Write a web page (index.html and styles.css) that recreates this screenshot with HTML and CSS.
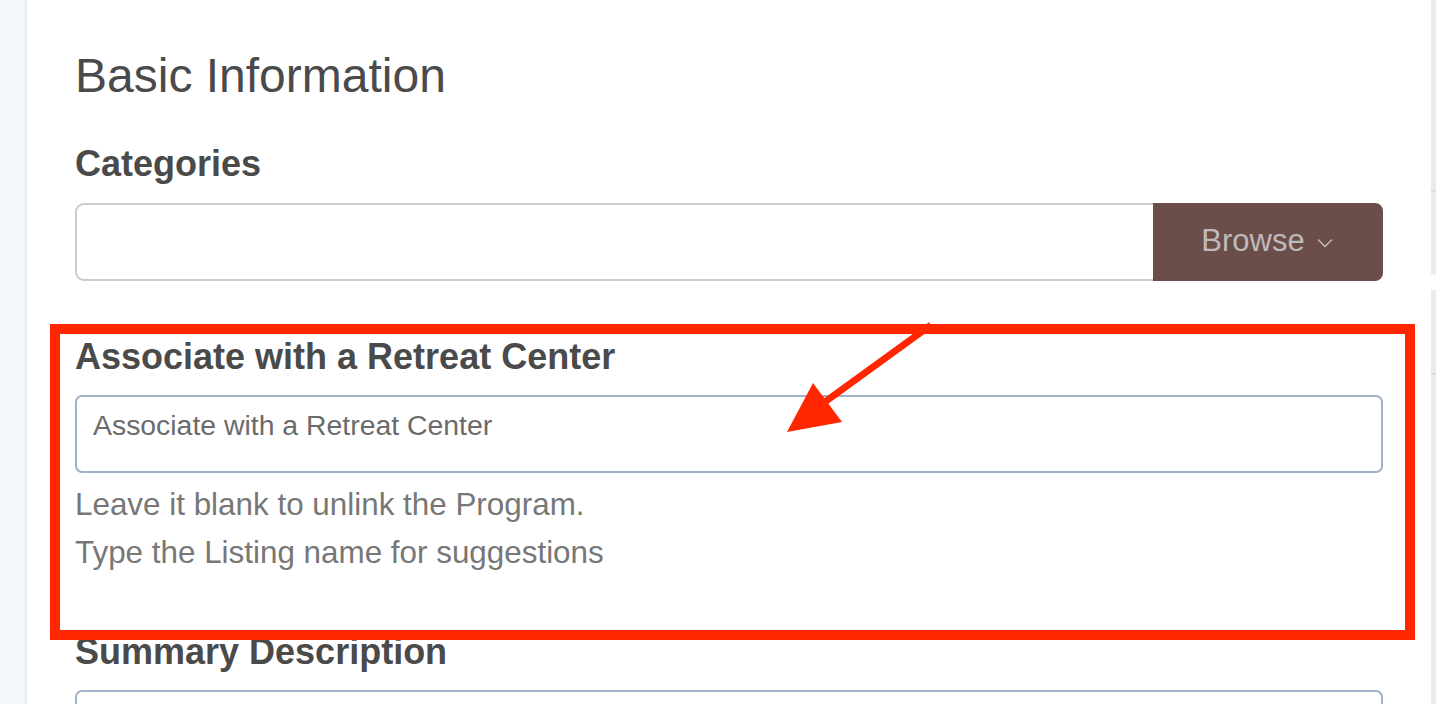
FILE: index.html
```html
<!DOCTYPE html>
<html lang="en">
<head>
<meta charset="utf-8">
<title>Basic Information</title>
<link rel="stylesheet" href="styles.css">
</head>
<body>
<div class="page">
  <aside class="sidebar"></aside>
  <main class="main">
    <h2 class="title">Basic Information</h2>

    <div class="group group-categories">
      <label class="label" for="cat">Categories</label>
      <div class="input-group">
        <input id="cat" class="field field-grey" type="text">
        <button class="browse" type="button">Browse
          <svg class="chev" width="16" height="10" viewBox="0 0 16 10"><path d="M1 1.5 L8 8.5 L15 1.5" fill="none" stroke="currentColor" stroke-width="1.5"/></svg>
        </button>
      </div>
    </div>

    <div class="group group-retreat">
      <label class="label" for="retreat">Associate with a Retreat Center</label>
      <input id="retreat" class="field field-blue field-top" type="text" placeholder="Associate with a Retreat Center">
      <p class="help">Leave it blank to unlink the Program.<br>Type the Listing name for suggestions</p>
    </div>

    <div class="group group-summary">
      <label class="label" for="summary">Summary Description</label>
      <div class="field field-blue field-tall" id="summary"></div>
    </div>

    <div class="highlight"></div>
    <svg class="arrow" width="1436" height="704" viewBox="0 0 1436 704">
      <line x1="931" y1="325" x2="822" y2="404" stroke="#ff2600" stroke-width="7"/>
      <polygon points="787,432 813,383 842,422" fill="#ff2600"/>
    </svg>
  </main>
  <div class="rail">
    <div class="rail-panel rail-a"><div class="rail-line"></div></div>
    <div class="rail-panel rail-b"><div class="rail-line"></div></div>
  </div>
</div>
</body>
</html>
```
FILE: styles.css
```css
* { box-sizing: border-box; }
html, body { margin: 0; padding: 0; background: #ffffff; }
body {
  font-family: "Liberation Sans", Arial, Helvetica, sans-serif;
  color: #4a4a4a;
  overflow: hidden;
}
.page {
  display: flex;
  width: 1436px;
  height: 704px;
  overflow: hidden;
}
.sidebar {
  width: 27px;
  flex: 0 0 27px;
  background: #f3f7fa;
  border-right: 2px solid #e3ebef;
}
.main {
  flex: 0 0 1404px;
  padding: 47px 0 0 48px;
  position: relative;
  overflow: hidden;
}
.title {
  margin: 0;
  font-size: 48px;
  line-height: 58px;
  font-weight: 400;
  color: #4a4a4a;
  width: 1308px;
}
.group { width: 1308px; }
.group-categories { margin-top: 37px; }
.group-retreat { margin-top: 54px; }
.group-summary { margin-top: 53px; }
.label {
  display: block;
  font-size: 36px;
  line-height: 43px;
  font-weight: 700;
  color: #4a4a4a;
  margin-bottom: 17px;
}
.group-categories .label { margin-bottom: 18px; }
.input-group {
  display: flex;
  height: 78px;
}
.field {
  display: block;
  width: 100%;
  height: 78px;
  font-family: inherit;
  font-size: 28.4px;
  color: #555;
  background: #fff;
  outline: none;
  margin: 0;
}
.field-grey {
  flex: 1 1 auto;
  border: 2px solid #cccccc;
  border-right: 0;
  border-radius: 9px 0 0 9px;
}
.field-blue {
  border: 2px solid #a1b1c6;
  border-radius: 7px;
}
.field-top {
  padding: 12px 16px 30px;
}
.field-top::placeholder { color: #6b6b6b; opacity: 1; }
.field-tall { height: 120px; }
.browse {
  flex: 0 0 230px;
  height: 78px;
  border: 0;
  border-radius: 0 8px 8px 0;
  background: #6b4d4a;
  color: #bfbbbb;
  font-family: inherit;
  font-size: 31px;
  display: flex;
  align-items: center;
  justify-content: center;
  gap: 12px;
  padding: 0 2px 2px 0;
  margin: 0;
}
.chev { margin-top: 3px; }
.help {
  margin: 8px 0 0;
  font-size: 31.4px;
  line-height: 48px;
  color: #777777;
}
.highlight {
  position: absolute;
  left: 23px;
  top: 324px;
  width: 1365px;
  height: 316px;
  border: 10px solid #ff2600;
  pointer-events: none;
}
.arrow {
  position: absolute;
  left: -27px;
  top: 0;
  pointer-events: none;
}
.rail {
  flex: 0 0 5px;
  display: flex;
  flex-direction: column;
  gap: 15px;
}
.rail-panel {
  background: #e9edf1;
  width: 100%;
}
.rail-a { height: 275px; }
.rail-b { flex: 1 1 auto; }
.rail-line {
  height: 2px;
  background: #d9dee3;
}
.rail-a .rail-line { margin-top: 190px; }
.rail-b .rail-line { margin-top: 83px; }
```
